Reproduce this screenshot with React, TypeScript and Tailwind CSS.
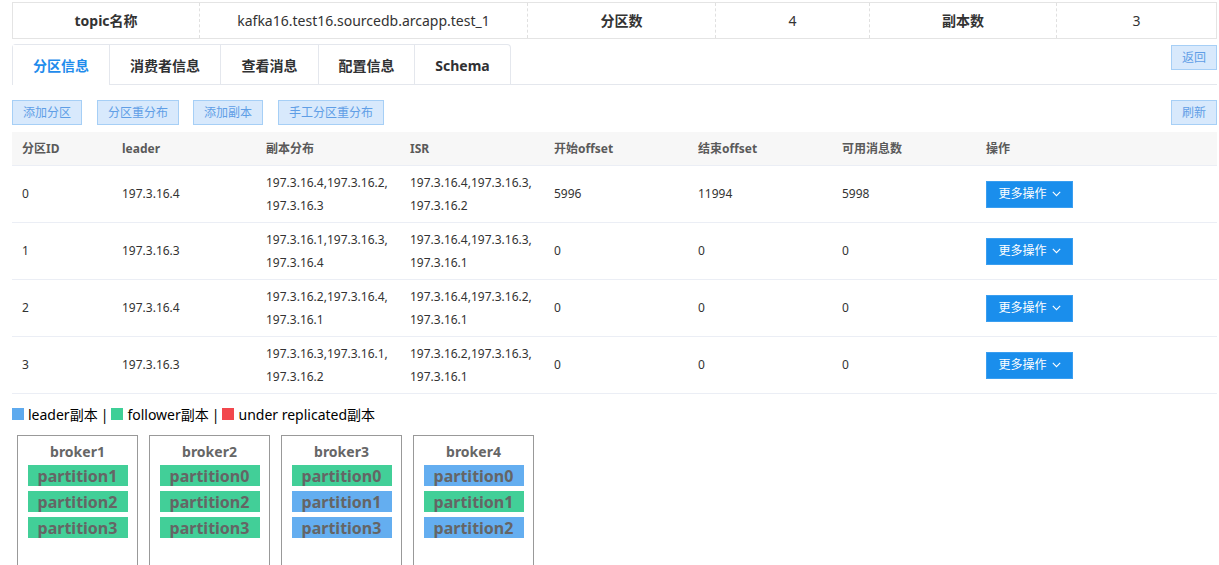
import React from "react";

const FONT = { fontFamily: '"Noto Sans", "Noto Sans CJK SC", sans-serif' };

const rows = [
  { id: "0", leader: "197.3.16.4", rep: ["197.3.16.4,197.3.16.2,", "197.3.16.3"], isr: ["197.3.16.4,197.3.16.3,", "197.3.16.2"], start: "5996", end: "11994", avail: "5998" },
  { id: "1", leader: "197.3.16.3", rep: ["197.3.16.1,197.3.16.3,", "197.3.16.4"], isr: ["197.3.16.4,197.3.16.3,", "197.3.16.1"], start: "0", end: "0", avail: "0" },
  { id: "2", leader: "197.3.16.4", rep: ["197.3.16.2,197.3.16.4,", "197.3.16.1"], isr: ["197.3.16.4,197.3.16.2,", "197.3.16.1"], start: "0", end: "0", avail: "0" },
  { id: "3", leader: "197.3.16.3", rep: ["197.3.16.3,197.3.16.1,", "197.3.16.2"], isr: ["197.3.16.2,197.3.16.3,", "197.3.16.1"], start: "0", end: "0", avail: "0" },
];

const brokers: { name: string; parts: { n: string; leader: boolean }[] }[] = [
  { name: "broker1", parts: [{ n: "partition1", leader: false }, { n: "partition2", leader: false }, { n: "partition3", leader: false }] },
  { name: "broker2", parts: [{ n: "partition0", leader: false }, { n: "partition2", leader: false }, { n: "partition3", leader: false }] },
  { name: "broker3", parts: [{ n: "partition0", leader: false }, { n: "partition1", leader: true }, { n: "partition3", leader: true }] },
  { name: "broker4", parts: [{ n: "partition0", leader: true }, { n: "partition1", leader: false }, { n: "partition2", leader: true }] },
];

function LightBtn({ children, w }: { children: React.ReactNode; w: string }) {
  return (
    <button className={`h-[25px] ${w} bg-[#d8e9fc] border border-[#a6cff6] text-[#5f9ee6] text-[12px] flex items-center justify-center`}>
      {children}
    </button>
  );
}

export default function App() {
  const tabs = [
    { t: "分区信息", w: "w-[96px]", active: true },
    { t: "消费者信息", w: "w-[111px]" },
    { t: "查看消息", w: "w-[98px]" },
    { t: "配置信息", w: "w-[96px]" },
    { t: "Schema", w: "w-[96px]" },
  ];
  return (
    <div style={FONT} className="pl-[12px] pr-[2px] pt-[2px] bg-white text-[#333] w-[1219px] h-[565px] overflow-hidden">
      {/* info table */}
      <div className="flex h-[37px] border border-[#e4e4e4] text-[14px]">
        <div className="w-[187px] flex items-center justify-center font-bold text-[#333] border-r border-dashed border-[#e0e0e0]">topic名称</div>
        <div className="w-[328px] flex items-center justify-center border-r border-dashed border-[#e0e0e0]">kafka16.test16.sourcedb.arcapp.test_1</div>
        <div className="w-[188px] flex items-center justify-center font-bold border-r border-dashed border-[#e0e0e0]">分区数</div>
        <div className="w-[154px] flex items-center justify-center border-r border-dashed border-[#e0e0e0]">4</div>
        <div className="w-[187px] flex items-center justify-center font-bold border-r border-dashed border-[#e0e0e0]">副本数</div>
        <div className="flex-1 flex items-center justify-center">3</div>
      </div>

      {/* tabs */}
      <div className="mt-[5px] flex justify-between border-b border-[#e4e7ed] h-[41px]">
        <div className="flex border border-b-0 border-[#e4e7ed] rounded-t-[4px] h-[41px]">
          {tabs.map((tb, i) => (
            <div
              key={tb.t}
              className={`${tb.w} h-[40px] flex items-center justify-center text-[14px] font-bold ${i > 0 ? "border-l border-[#e4e7ed]" : ""} ${tb.active ? "text-[#1f8cec] bg-white h-[41px]" : "text-[#303133]"}`}
            >
              {tb.t}
            </div>
          ))}
        </div>
        <div className="pt-[1px]">
          <LightBtn w="w-[46px]">返回</LightBtn>
        </div>
      </div>

      {/* action buttons */}
      <div className="mt-[15px] flex justify-between">
        <div className="flex">
          <LightBtn w="w-[70px]">添加分区</LightBtn>
          <div className="ml-[15px]"><LightBtn w="w-[82px]">分区重分布</LightBtn></div>
          <div className="ml-[14px]"><LightBtn w="w-[70px]">添加副本</LightBtn></div>
          <div className="ml-[15px]"><LightBtn w="w-[106px]">手工分区重分布</LightBtn></div>
        </div>
        <LightBtn w="w-[46px]">刷新</LightBtn>
      </div>

      {/* table */}
      <div className="mt-[7px] text-[12px]">
        <div className="flex h-[34px] items-center bg-[#f7f7f7] border-b border-[#ebeef5] font-bold text-[#5a5a5a]">
          <div className="w-[100px] pl-[10px]">分区ID</div>
          <div className="w-[144px] pl-[10px]">leader</div>
          <div className="w-[144px] pl-[10px]">副本分布</div>
          <div className="w-[144px] pl-[10px]">ISR</div>
          <div className="w-[144px] pl-[10px]">开始offset</div>
          <div className="w-[144px] pl-[10px]">结束offset</div>
          <div className="w-[144px] pl-[10px]">可用消息数</div>
          <div className="w-[144px] pl-[10px]">操作</div>
        </div>
        {rows.map((r) => (
          <div key={r.id} className="flex h-[57px] items-center border-b border-[#ebeef5] text-[#333]">
            <div className="w-[100px] pl-[10px]">{r.id}</div>
            <div className="w-[144px] pl-[10px]">{r.leader}</div>
            <div className="w-[144px] pl-[10px] leading-[23px]">
              <div>{r.rep[0]}</div>
              <div>{r.rep[1]}</div>
            </div>
            <div className="w-[144px] pl-[10px] leading-[23px]">
              <div>{r.isr[0]}</div>
              <div>{r.isr[1]}</div>
            </div>
            <div className="w-[144px] pl-[10px]">{r.start}</div>
            <div className="w-[144px] pl-[10px]">{r.end}</div>
            <div className="w-[144px] pl-[10px]">{r.avail}</div>
            <div className="w-[144px] pl-[10px]">
              <button className="w-[87px] h-[27px] bg-[#1a8eec] border border-[#3a9ef0] text-white text-[12px] flex items-center justify-center gap-[5px]">
                <span>更多操作</span>
                <svg width="9" height="6" viewBox="0 0 9 6" fill="none">
                  <path d="M0.8 0.8 L4.5 4.6 L8.2 0.8" stroke="white" strokeWidth="1.1" />
                </svg>
              </button>
            </div>
          </div>
        ))}
      </div>

      {/* legend */}
      <div className="mt-[10px] flex items-center text-[14px] text-black h-[20px]">
        <span className="w-[12px] h-[12px] bg-[#5eaaee] inline-block mr-[4px]" />
        <span>leader副本</span>
        <span className="mx-[3px]">|</span>
        <span className="w-[12px] h-[12px] bg-[#3ecf97] inline-block mr-[4px]" />
        <span>follower副本</span>
        <span className="mx-[3px]">|</span>
        <span className="w-[12px] h-[12px] bg-[#f2474d] inline-block mr-[4px]" />
        <span>under replicated副本</span>
      </div>

      {/* brokers */}
      <div className="mt-[11px] ml-[5px] flex gap-[11px]">
        {brokers.map((b) => (
          <div key={b.name} className="w-[121px] h-[140px] border border-[#999] flex flex-col items-center">
            <div className="mt-[5px] h-[22px] leading-[22px] text-[14px] font-bold text-[#666]">{b.name}</div>
            <div className="mt-[2px] flex flex-col gap-[5px]">
              {b.parts.map((p) => (
                <div
                  key={p.n}
                  className={`w-[100px] h-[21px] flex items-center justify-center text-[16px] font-bold text-[#656565] ${p.leader ? "bg-[#64aef0]" : "bg-[#42cf98]"}`}
                >
                  {p.n}
                </div>
              ))}
            </div>
          </div>
        ))}
      </div>
    </div>
  );
}
